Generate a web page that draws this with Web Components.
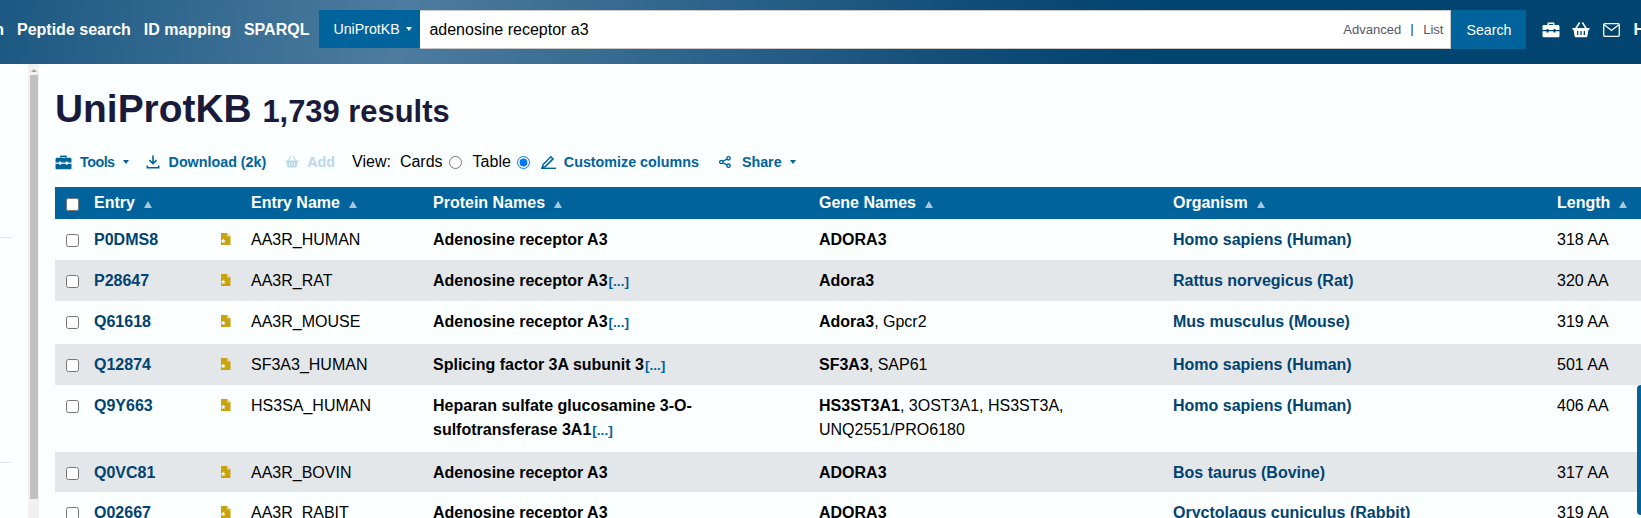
<!DOCTYPE html>
<html lang="en">
<head>
<meta charset="utf-8">
<title>UniProtKB results</title>
<style>
    html, body { margin: 0; height: 518px; overflow: hidden; background: #fbffff; }
    body { font-family: "Liberation Sans", Arial, sans-serif; color: #000; }
</style>
</head>
<body>
<up-page>
    <up-header slot="header"></up-header>
    <up-side slot="side"></up-side>
    <up-scrollbar slot="scroll"></up-scrollbar>
    <up-title>
        <span>UniProtKB</span>
        <small>1,739 results</small>
    </up-title>
    <up-toolbar></up-toolbar>
    <up-table>
        <up-row h="41" entry="P0DMS8" name="AA3R_HUMAN" org="Homo sapiens (Human)" len="318 AA">
            <span slot="protein">Adenosine receptor A3</span>
            <span slot="gene"><b>ADORA3</b></span>
        </up-row>
        <up-row h="41" alt entry="P28647" name="AA3R_RAT" org="Rattus norvegicus (Rat)" len="320 AA">
            <span slot="protein">Adenosine receptor A3<up-more></up-more></span>
            <span slot="gene"><b>Adora3</b></span>
        </up-row>
        <up-row h="43" entry="Q61618" name="AA3R_MOUSE" org="Mus musculus (Mouse)" len="319 AA">
            <span slot="protein">Adenosine receptor A3<up-more></up-more></span>
            <span slot="gene"><b>Adora3</b>, Gpcr2</span>
        </up-row>
        <up-row h="41" alt entry="Q12874" name="SF3A3_HUMAN" org="Homo sapiens (Human)" len="501 AA">
            <span slot="protein">Splicing factor 3A subunit 3<up-more></up-more></span>
            <span slot="gene"><b>SF3A3</b>, SAP61</span>
        </up-row>
        <up-row h="67" entry="Q9Y663" name="HS3SA_HUMAN" org="Homo sapiens (Human)" len="406 AA">
            <span slot="protein">Heparan sulfate glucosamine 3-O-<br>sulfotransferase 3A1<up-more></up-more></span>
            <span slot="gene"><b>HS3ST3A1</b>, 3OST3A1, HS3ST3A,<br>UNQ2551/PRO6180</span>
        </up-row>
        <up-row h="40" alt entry="Q0VC81" name="AA3R_BOVIN" org="Bos taurus (Bovine)" len="317 AA">
            <span slot="protein">Adenosine receptor A3</span>
            <span slot="gene"><b>ADORA3</b></span>
        </up-row>
        <up-row h="41" entry="O02667" name="AA3R_RABIT" org="Oryctolagus cuniculus (Rabbit)" len="319 AA">
            <span slot="protein">Adenosine receptor A3</span>
            <span slot="gene"><b>ADORA3</b></span>
        </up-row>
    </up-table>
</up-page>
<up-feedback-tab></up-feedback-tab>

<script>
// icons shared by the header and the toolbar
const ICONS = {
    tools: '<svg viewBox="0 0 18 16" width="W" height="H" fill="currentColor"><path d="M5.500 3V1.600C5.500.9 6 .5 6.600.5h4.800c.6 0 1.100.4 1.100 1.100V3H11V2H7v1z"/><path d="M2 3h14c.9 0 1.500.6 1.500 1.500V8h-4V7h-2v1h-5V7h-2v1h-4V4.500C.5 3.600 1.100 3 2 3z"/><path d="M.5 9.200h4v1.300h2V9.200h5v1.300h2V9.200h4v4.800c0 .7-.6 1.300-1.300 1.300H1.800C1.100 15.300.5 14.700.5 14z"/></svg>',
    basket: '<svg viewBox="0 0 18 16" width="W" height="H"><path d="M3.500 7 7.300 1M14.500 7 10.700 1" stroke="currentColor" stroke-width="1.500" fill="none" stroke-linecap="round"/><path fill="currentColor" d="M.5 6h17v1.800h-1l-1.200 6.600c-.1.500-.5.800-1 .8H3.700c-.5 0-.9-.3-1-.8L1.500 7.800h-1zM5 9v4h1.300V9zm3.350 0v4h1.300V9zM11.700 9v4H13V9z"/></svg>',
    mail: '<svg viewBox="0 0 17 14" width="W" height="H" fill="none" stroke="currentColor" stroke-width="1.300"><rect x=".7" y=".7" width="15.600" height="12.600" rx="1.200"/><path d="M1.200 1.800 8.500 7.500l7.300-5.700"/></svg>',
    download: '<svg viewBox="0 0 14 14" width="W" height="H" fill="currentColor"><path d="M6.200.5h1.600v6.200l2.100-2.100 1.100 1.100L7 9.800 2.900 5.700 4 4.600l2.200 2.100z"/><path d="M.5 10.500h1.600v1.400h9.800v-1.400h1.600v3H.5z"/></svg>',
    pencil: '<svg viewBox="0 0 15 14" width="W" height="H"><path fill="none" stroke="currentColor" stroke-width="1.500" d="M2 9.800 9.800 1.800l2.200 2.100-7.900 7.900-2.700.5z"/><path fill="currentColor" d="M0 12.600h15v1.400H0z"/></svg>',
    share: '<svg viewBox="0 0 13 13" width="W" height="H" fill="none" stroke="currentColor" stroke-width="1.500"><circle cx="2.500" cy="6.500" r="1.800"/><circle cx="10.300" cy="2.500" r="1.800"/><circle cx="10.300" cy="10.500" r="1.800"/><path d="M4.200 5.700 8.600 3.300M4.200 7.300l4.400 2.400"/></svg>'
};

function icon(name, w, h) {
    return ICONS[name].replace('"W"', `"${w}"`).replace('"H"', `"${h}"`);
}

class UpPage extends HTMLElement {
    constructor() {
        super();
        this.attachShadow({ mode: 'open' });
        this.shadowRoot.innerHTML = `
            <style>
                :host { display: block; height: 518px; overflow: hidden; }
                .body { display: flex; height: 454px; overflow: hidden; }
                .main { flex: 1; min-width: 0; padding-left: 16px; }
            </style>
            <slot name="header"></slot>
            <div class="body">
                <slot name="side"></slot>
                <slot name="scroll"></slot>
                <div class="main"><slot></slot></div>
            </div>
        `;
    }
}

class UpHeader extends HTMLElement {
    constructor() {
        super();
        this.attachShadow({ mode: 'open' });
        this.shadowRoot.innerHTML = `
            <style>
                :host {
                    display: flex;
                    align-items: center;
                    box-sizing: border-box;
                    height: 64px;
                    padding-bottom: 5px;
                    overflow: hidden;
                    color: #fff;
                    background: linear-gradient(100deg, #1c5882 0, #4d7c9f 400px, #0d4a75 1000px, #00446f 1150px, #00446f 100%);
                }
                nav {
                    display: flex;
                    gap: 13px;
                    margin-left: -36px;
                    font-size: 16px;
                    font-weight: bold;
                    white-space: nowrap;
                }
                .search {
                    display: flex;
                    flex: none;
                    height: 39px;
                    margin-left: 10px;
                    width: 1207px;
                    font-size: 14.200px;
                }
                .db {
                    display: flex;
                    align-items: center;
                    box-sizing: border-box;
                    width: 101px;
                    height: 38px;
                    padding-left: 14px;
                    background: #00639c;
                }
                .db i {
                    width: 0;
                    height: 0;
                    margin-left: 6px;
                    border: 3px solid transparent;
                    border-top: 4px solid #fff;
                    border-bottom: 0;
                }
                .input {
                    flex: 1;
                    display: flex;
                    align-items: center;
                    justify-content: space-between;
                    box-sizing: border-box;
                    height: 39px;
                    padding: 0 7px 0 9px;
                    background: #fff;
                    border: 1px solid #c8c8c8;
                    border-left: 0;
                    color: #000;
                    font-size: 16px;
                }
                .links { display: flex; align-items: center; gap: 10px; color: #54566a; font-size: 13px; }
                .links i { width: 2px; height: 12px; background: linear-gradient(90deg, #d9924a 50%, #3f8fd0 50%); }
                .go {
                    display: flex;
                    align-items: center;
                    justify-content: center;
                    width: 75px;
                    height: 39px;
                    background: #00639c;
                }
                .right {
                    display: flex;
                    align-items: center;
                    margin-left: 16px;
                    white-space: nowrap;
                }
                .right svg:nth-child(2) { margin-left: 12px; }
                .right svg:nth-child(3) { margin-left: 13px; }
                .right b { font-size: 16px; margin-left: 13px; }
                svg { display: block; flex: none; }
            </style>
            <nav><span>Align</span><span>Peptide search</span><span>ID mapping</span><span>SPARQL</span></nav>
            <div class="search">
                <div class="db">UniProtKB<i></i></div>
                <div class="input">
                    <span>adenosine receptor a3</span>
                    <span class="links"><span>Advanced</span><i></i><span>List</span></span>
                </div>
                <div class="go">Search</div>
            </div>
            <div class="right">
                ${icon('tools', 18, 16)}${icon('basket', 18, 16)}${icon('mail', 17, 14)}<b>Help</b>
            </div>
        `;
    }
}

class UpSide extends HTMLElement {
    constructor() {
        super();
        this.attachShadow({ mode: 'open' });
        this.shadowRoot.innerHTML = `
            <style>
                :host { display: block; flex: none; width: 28px; }
                div { width: 12px; height: 1px; background: #e6e6e6; }
                .a { margin-top: 173px; }
                .b { margin-top: 224px; }
            </style>
            <div class="a"></div>
            <div class="b"></div>
        `;
    }
}

class UpScrollbar extends HTMLElement {
    constructor() {
        super();
        this.attachShadow({ mode: 'open' });
        this.shadowRoot.innerHTML = `
            <style>
                :host { display: block; flex: none; width: 11px; background: #f1f1f1; }
                .up {
                    width: 0;
                    height: 0;
                    margin: 5px 0 0 3px;
                    border: 3px solid transparent;
                    border-bottom: 3px solid #a3a3a3;
                    border-top: 0;
                }
                .thumb { width: 8px; height: 424px; margin: 3px 0 0 2px; background: #c1c1c1; }
            </style>
            <div class="up"></div>
            <div class="thumb"></div>
        `;
    }
}

class UpTitle extends HTMLElement {
    constructor() {
        super();
        this.attachShadow({ mode: 'open' });
        this.shadowRoot.innerHTML = `
            <style>
                :host {
                    display: block;
                    box-sizing: border-box;
                    height: 80px;
                    padding-top: 23px;
                    color: #1a1a3a;
                    font-size: 38.900px;
                    font-weight: bold;
                    line-height: 44px;
                    white-space: nowrap;
                }
                ::slotted(small) { font-size: 30.900px; }
            </style>
            <slot></slot>
        `;
    }
}

class UpToolbar extends HTMLElement {
    constructor() {
        super();
        this.attachShadow({ mode: 'open' });
        this.shadowRoot.innerHTML = `
            <style>
                :host {
                    display: flex;
                    align-items: center;
                    height: 36px;
                    color: #00639c;
                    font-size: 14.300px;
                    font-weight: bold;
                    white-space: nowrap;
                }
                span { display: flex; align-items: center; }
                svg { display: block; margin-right: var(--g, 8px); }
                i {
                    width: 0;
                    height: 0;
                    margin-left: 8px;
                    border: 3px solid transparent;
                    border-top: 4px solid currentColor;
                    border-bottom: 0;
                }
                .add { color: #bcd7e7; margin-left: 19px; --g: 8px; }
                .view { color: #000; font-size: 16px; font-weight: normal; margin-left: 17px; }
                input { width: 13px; height: 13px; margin: 0; }
            </style>
            <span>${icon('tools', 17, 15)}<span style="letter-spacing:-.5px">Tools</span><i></i></span>
            <span style="margin-left:17px;--g:9px">${icon('download', 14, 14)}Download (2k)</span>
            <span class="add">${icon('basket', 14, 12)}Add</span>
            <span class="view">View:<span style="margin-left:9px">Cards</span><input type="radio" name="view" style="margin-left:6px"><span style="margin-left:11px">Table</span><input type="radio" name="view" style="margin-left:6px" checked></span>
            <span style="margin-left:11px">${icon('pencil', 15, 14)}Customize columns</span>
            <span style="margin-left:20px;--g:11px">${icon('share', 12, 12)}Share<i></i></span>
        `;
    }
}

const COLUMNS = '39px 126px 31px 182px 386px 354px 384px 1fr';

class UpTable extends HTMLElement {
    constructor() {
        super();
        this.attachShadow({ mode: 'open' });
        const heads = ['', 'Entry', '', 'Entry Name', 'Protein Names', 'Gene Names', 'Organism', 'Length'];
        const cells = heads.map((label, i) => {
            if (i === 0) return '<div><input type="checkbox"></div>';
            return label ? `<div>${label}<i></i></div>` : '<div></div>';
        }).join('');
        this.shadowRoot.innerHTML = `
            <style>
                :host { display: block; margin-top: 7px; }
                .head {
                    display: grid;
                    grid-template-columns: ${COLUMNS};
                    align-items: center;
                    height: 32px;
                    background: #00639c;
                    color: #fff;
                    font-size: 16px;
                    font-weight: bold;
                    white-space: nowrap;
                }
                .head div { display: flex; align-items: center; }
                i {
                    width: 0;
                    height: 0;
                    margin: 2px 0 0 9px;
                    border: 4px solid transparent;
                    border-bottom: 7px solid #a9c7da;
                    border-top: 0;
                }
                input { margin: 2px 0 0 11px; width: 13px; height: 13px; }
            </style>
            <div class="head">${cells}</div>
            <slot></slot>
        `;
    }
}

class UpRow extends HTMLElement {
    connectedCallback() {
        if (this.shadowRoot) return;
        this.attachShadow({ mode: 'open' });
        const attr = (n) => this.getAttribute(n) || '';
        this.shadowRoot.innerHTML = `
            <style>
                :host {
                    display: grid;
                    grid-template-columns: ${COLUMNS};
                    box-sizing: border-box;
                    height: ${attr('h')}px;
                    padding-top: 8.500px;
                    background: ${this.hasAttribute('alt') ? '#e4e7ea' : 'transparent'};
                    font-size: 16px;
                    line-height: 24.400px;
                    white-space: nowrap;
                }
                input { margin: 6px 0 0 11px; width: 13px; height: 13px; }
                .link { color: #014371; font-weight: bold; }
                .protein { font-weight: bold; }
                svg { display: block; margin-top: 5.500px; }
            </style>
            <div><input type="checkbox"></div>
            <div class="link">${attr('entry')}</div>
            <div>
                <svg viewBox="0 0 11 12" width="11" height="12">
                    <path fill="#c9a20f" d="M1 0H7l3.500 3.500V12H1z"/>
                    <path fill="#e6d58c" d="M7 0l3.500 3.500H7z"/>
                    <path fill="#fbffff" d="m3.200 5.500.7 1.500 1.700.2-1.200 1.100.3 1.700-1.500-.8-1.500.8.300-1.700L.5 7.200 2.500 7z"/>
                </svg>
            </div>
            <div>${attr('name')}</div>
            <div class="protein"><slot name="protein"></slot></div>
            <div><slot name="gene"></slot></div>
            <div class="link">${attr('org')}</div>
            <div>${attr('len')}</div>
        `;
    }
}

class UpMore extends HTMLElement {
    constructor() {
        super();
        this.attachShadow({ mode: 'open' });
        this.shadowRoot.innerHTML = '<style>:host { display: inline; color: #00639c; font-size: 13.600px; font-weight: bold; margin-left: 1px; }</style>[...]';
    }
}

class UpFeedbackTab extends HTMLElement {
    constructor() {
        super();
        this.attachShadow({ mode: 'open' });
        this.shadowRoot.innerHTML = `
            <style>
                :host {
                    position: fixed;
                    top: 385px;
                    right: 0;
                    width: 4px;
                    height: 130px;
                    background: #00639c;
                    border-radius: 4px 0 0 4px;
                }
            </style>
        `;
    }
}

customElements.define('up-page', UpPage);
customElements.define('up-header', UpHeader);
customElements.define('up-side', UpSide);
customElements.define('up-scrollbar', UpScrollbar);
customElements.define('up-title', UpTitle);
customElements.define('up-toolbar', UpToolbar);
customElements.define('up-table', UpTable);
customElements.define('up-row', UpRow);
customElements.define('up-more', UpMore);
customElements.define('up-feedback-tab', UpFeedbackTab);
</script>
</body>
</html>
